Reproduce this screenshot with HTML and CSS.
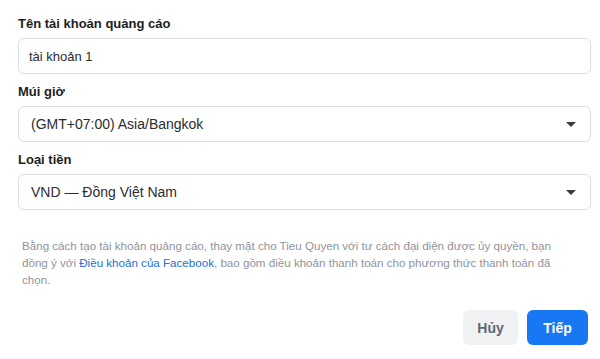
FILE: index.html
```html
<!DOCTYPE html>
<html lang="vi">
<head>
<meta charset="utf-8">
<link rel="stylesheet" href="styles.css">
</head>
<body>
<div class="dialog">
  <div class="field">
    <div class="label">Tên tài khoản quảng cáo</div>
    <div class="control"><span class="value">tài khoản 1</span></div>
  </div>
  <div class="field">
    <div class="label">Múi giờ</div>
    <div class="control select"><span class="value">(GMT+07:00) Asia/Bangkok</span><span class="caret"></span></div>
  </div>
  <div class="field">
    <div class="label">Loại tiền</div>
    <div class="control select"><span class="value">VND — Đồng Việt Nam</span><span class="caret"></span></div>
  </div>
  <p class="terms">Bằng cách tạo tài khoản quảng cáo, thay mặt cho Tieu Quyen với tư cách đại diện được ủy quyền, bạn đồng ý với <a class="link">Điều khoản của Facebook</a>, bao gồm điều khoản thanh toán cho phương thức thanh toán đã chọn.</p>
  <div class="actions">
    <button class="btn cancel">Hủy</button>
    <button class="btn primary">Tiếp</button>
  </div>
</div>
</body>
</html>
```
FILE: styles.css
```css
html, body {
  margin: 0;
  padding: 0;
  background: #ffffff;
}
body {
  font-family: "Liberation Sans", Arial, "Noto Sans", sans-serif;
  color: #1c1e21;
}
.dialog {
  width: 600px;
  height: 359px;
  box-sizing: border-box;
  padding: 14px 9px 0 18px;
  display: flex;
  flex-direction: column;
}
.field {
  display: flex;
  flex-direction: column;
}
.field + .field .label {
  margin-top: 8px;
}
.label {
  font-size: 13px;
  font-weight: bold;
  line-height: 20px;
  margin-bottom: 4px;
  color: #1c1e21;
}
.control {
  height: 36px;
  box-sizing: border-box;
  border: 1px solid #dadde1;
  border-radius: 6px;
  display: flex;
  align-items: center;
  padding: 0 14px 0 10px;
  font-size: 13px;
  color: #2b2d30;
}
.select .value {
  padding-left: 2px;
  font-size: 14px;
}
.value {
  flex: 1;
}
.caret {
  width: 0;
  height: 0;
  border-left: 5px solid transparent;
  border-right: 5px solid transparent;
  border-top: 5px solid #3a3b3c;
}
.terms {
  margin: 27px 14px 0 4px;
  font-size: 11.6px;
  line-height: 17px;
  color: #90949c;
}
.link {
  color: #216fdb;
}
.actions {
  margin-top: 22px;
  display: flex;
  justify-content: flex-end;
  gap: 9px;
  padding-right: 3px;
}
.btn {
  height: 35px;
  border: none;
  border-radius: 6px;
  font-family: inherit;
  font-size: 14px;
  font-weight: bold;
  padding: 0;
}
.cancel {
  width: 55px;
  background: #f0f1f2;
  color: #606770;
}
.primary {
  width: 61px;
  background: #1877f2;
  color: #ffffff;
}
```
